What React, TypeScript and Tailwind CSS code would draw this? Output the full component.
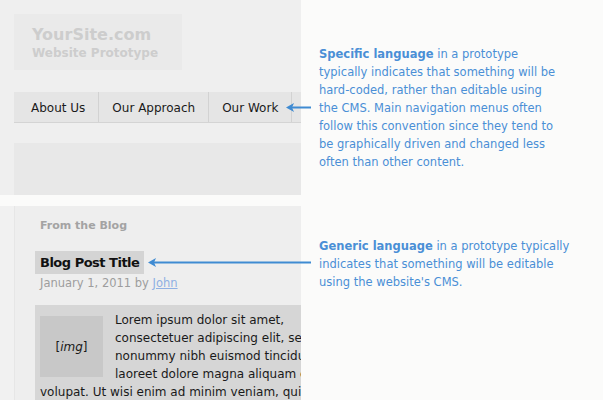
const sans = { fontFamily: '"DejaVu Sans", Verdana, sans-serif' };

function Arrow({ width }: { width: number }) {
  return (
    <svg width={width} height="9" viewBox={`0 0 ${width} 9`} className="block">
      <line x1="4" y1="4.5" x2={width} y2="4.5" stroke="#3f8bd2" strokeWidth="2" />
      <path d="M0 4.5 L8 0 L6 4.5 L8 9 Z" fill="#3f8bd2" />
    </svg>
  );
}

function Note({ title, lines }: { title: string; lines: string[] }) {
  return (
    <p className="text-[11.5px] leading-[18px] text-[#4a8fd6] whitespace-nowrap">
      {lines.map((line, i) => (
        <span key={i} className="block">
          {i === 0 && <span className="font-bold">{title}</span>}
          {line}
        </span>
      ))}
    </p>
  );
}

function TopMock() {
  return (
    <div className="shrink-0 w-[301px] h-[195px] bg-[#efefef] overflow-hidden pt-[14px] pl-[14px]">
      <div className="w-[168px] h-[56px] bg-[#eaeaea] pl-[18px] pt-[11px] text-[#cdcdcd] font-bold">
        <div className="text-[16px] leading-[20px]">YourSite.com</div>
        <div className="text-[12px] leading-[17px]">Website Prototype</div>
      </div>
      <nav className="mt-[22px] w-[400px] h-[31px] flex bg-[#e5e5e5] border-b border-[#d4d4d4] pl-[4px] text-[12px] text-[#1a1a1a]">
        {['About Us', 'Our Approach', 'Our Work'].map((item) => (
          <div key={item} className="px-[13px] pt-[1px] flex items-center border-r border-[#d2d2d2] whitespace-nowrap">
            {item}
          </div>
        ))}
      </nav>
      <div className="mt-[20px] w-[400px] h-[60px] bg-[#e8e8e8]" />
    </div>
  );
}

function BottomMock() {
  return (
    <div className="shrink-0 w-[301px] h-[194px] bg-[#f1f1f1] overflow-hidden pl-[14px]">
      <div className="h-full border-l border-[#e6e6e6] bg-[#eeeeee] pl-[20px] pt-[12px]">
        <div className="pl-[5px] text-[11px] leading-[16px] font-bold text-[#a3a3a3]">From the Blog</div>
        <div className="mt-[17px] inline-block bg-[#d4d4d4] px-[5px] h-[23px] text-[13px] leading-[23px] tracking-[-0.5px] font-bold text-[#111]">
          Blog Post Title
        </div>
        <div className="pl-[5px] mt-[1px] text-[11.5px] leading-[16px] text-[#9d9d9d]">
          January 1, 2011 by <span className="text-[#8fb0e3] underline">John</span>
        </div>
        <div className="mt-[14px] w-[400px] bg-[#d6d6d6] pl-[5px] pt-[6px] text-[12px] leading-[18px] text-[#1a1a1a] whitespace-nowrap">
          <div className="float-left mt-[5px] w-[63px] h-[61px] mr-[12px] bg-[#c8c8c8] flex items-center justify-center">
            [<i>img</i>]
          </div>
          <div>
            Lorem ipsum dolor sit amet,
            <br />
            consectetuer adipiscing elit, sed diam
            <br />
            nonummy nibh euismod tincidunt ut
            <br />
            laoreet dolore magna aliquam erat
            <br />
            volupat. Ut wisi enim ad minim veniam, quis
          </div>
        </div>
      </div>
    </div>
  );
}

export default function App() {
  return (
    <div className="relative w-[603px] h-[400px] bg-[#fbfbfa] overflow-hidden" style={sans}>
      <div className="flex h-[195px]">
        <TopMock />
        <div className="pl-[18px] pt-[45px]">
          <Note
            title="Specific language"
            lines={[
              ' in a prototype',
              'typically indicates that something will be',
              'hard-coded, rather than editable using',
              'the CMS. Main navigation menus often',
              'follow this convention since they tend to',
              'be graphically driven and changed less',
              'often than other content.',
            ]}
          />
        </div>
      </div>
      <div className="h-[11px]" />
      <div className="flex h-[194px]">
        <BottomMock />
        <div className="pl-[18px] pt-[31px]">
          <Note
            title="Generic language"
            lines={[
              ' in a prototype typically',
              'indicates that something will be editable',
              "using the website's CMS.",
            ]}
          />
        </div>
      </div>
      <div className="absolute left-[286px] top-[103px]">
        <Arrow width={25} />
      </div>
      <div className="absolute left-[148px] top-[258px]">
        <Arrow width={163} />
      </div>
    </div>
  );
}
